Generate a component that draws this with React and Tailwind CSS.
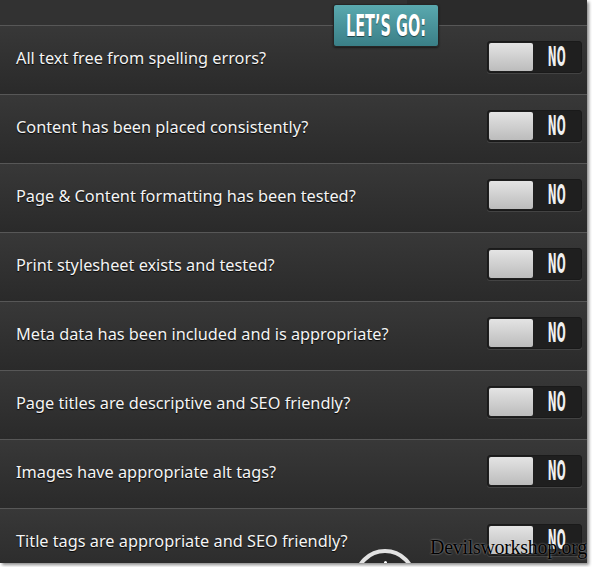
const items = [
  'All text free from spelling errors?',
  'Content has been placed consistently?',
  'Page & Content formatting has been tested?',
  'Print stylesheet exists and tested?',
  'Meta data has been included and is appropriate?',
  'Page titles are descriptive and SEO friendly?',
  'Images have appropriate alt tags?',
  'Title tags are appropriate and SEO friendly?',
]

const condensed = { fontFamily: '"DejaVu Sans Condensed", "DejaVu Sans", sans-serif' }

export default function App() {
  return (
    <div className="w-[592px] h-[567px] bg-white overflow-hidden">
      <div className="relative w-[587px] h-[563px] bg-[#2c2c2c] overflow-hidden shadow-[2px_2px_3px_rgba(0,0,0,0.45)]">
        {/* header strip */}
        <div className="flex h-[25px]">
          <div className="w-[407px] bg-[#323232]" />
          <div className="flex-1 bg-[#2b2b2b]" />
        </div>

        {items.map((label, i) => (
          <Row key={i} label={label} />
        ))}

        {/* Let's go tab */}
        <div className="absolute left-[333px] top-[4px] w-[106px] h-[43px] rounded-[3px] border border-[#262626] bg-gradient-to-b from-[#5aa9af] to-[#3a7f87] flex items-center justify-center shadow-[0_1px_2px_rgba(0,0,0,0.5)]">
          <span
            className="inline-block font-bold text-white text-[31px] leading-none scale-x-[0.52] [text-shadow:0_1px_1px_rgba(0,0,0,0.5)] whitespace-nowrap"
            style={condensed}
          >
            LET’S GO:
          </span>
        </div>

        {/* bottom round button peeking out */}
        <div className="absolute left-[354px] top-[549px] w-[62px] h-[62px] rounded-full border-[4px] border-[#e2e2e2] bg-[#2a2a2a] flex justify-center">
          <div className="mt-[8px] w-[3px] h-[3px] rounded-full bg-white" />
        </div>

        {/* watermark */}
        <div
          className="absolute right-[0px] top-[537px] text-[20px] text-black leading-none tracking-[-0.3px] [text-shadow:0_0_2px_rgba(255,255,255,0.6)]"
          style={{ fontFamily: '"Liberation Serif", serif' }}
        >
          Devilsworkshop.org
        </div>
      </div>
    </div>
  )
}

function Row({ label }) {
  return (
    <div className="h-[69px] border-t border-[#575757] bg-gradient-to-b from-[#383838] to-[#2a2a2a] flex items-center pb-[7px] pl-[16px] pr-[5px]">
      <span
        className="flex-1 mt-[3px] text-[16.3px] text-[#f4f4f4] [text-shadow:0_1px_1px_rgba(0,0,0,0.9)]"
        style={{ fontFamily: '"Noto Sans", sans-serif' }}
      >
        {label}
      </span>
      <Toggle />
    </div>
  )
}

function Toggle() {
  return (
    <div className="w-[95px] h-[32px] rounded-[3px] bg-[#1f1f1f] border border-[#1a1a1a] shadow-[0_1px_0_rgba(255,255,255,0.1)] flex items-stretch p-[1px]">
      <div className="w-[44px] rounded-[2px] bg-gradient-to-b from-[#e4e4e4] to-[#bcbcbc]" />
      <div className="flex-1 flex items-center justify-center">
        <span
          className="inline-block font-bold text-[#f0f0f0] text-[26px] leading-none scale-x-[0.45]"
          style={condensed}
        >
          NO
        </span>
      </div>
    </div>
  )
}
